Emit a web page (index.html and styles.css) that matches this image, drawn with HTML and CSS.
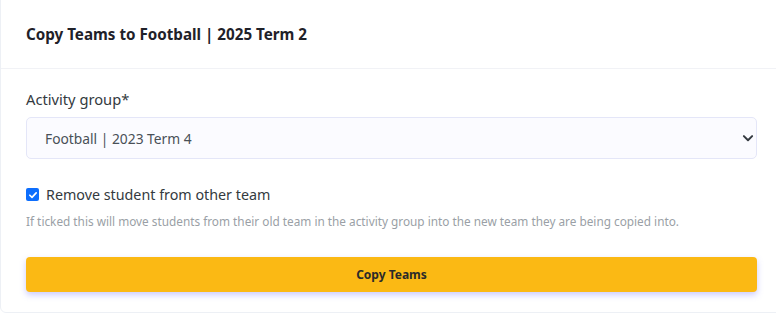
FILE: index.html
```html
<!DOCTYPE html>
<html lang="en">
<head>
    <meta charset="UTF-8">
    <meta name="viewport" content="width=device-width, initial-scale=1.0">
    <title>Copy Teams</title>
    <link rel="stylesheet" href="styles.css">
</head>
<body>
    <div class="card">
        <div class="card-header">
            <h2>Copy Teams to Football | 2025 Term 2</h2>
        </div>
        <div class="card-body">
            <label class="field-label" for="group">Activity group*</label>
            <div class="select-wrap">
                <select id="group" class="select">
                    <option>Football | 2023 Term 4</option>
                </select>
                <svg class="chevron" width="12" height="12" viewBox="0 0 16 16">
                    <path d="M2.5 5.5 L8 11 L13.5 5.5" fill="none" stroke="#343a40" stroke-width="2.6" stroke-linecap="round" stroke-linejoin="round"/>
                </svg>
            </div>

            <label class="check">
                <span class="box">
                    <svg width="10" height="10" viewBox="0 0 12 12">
                        <path d="M2.2 6.3 L4.8 8.8 L9.8 3.4" fill="none" stroke="#fff" stroke-width="2" stroke-linecap="round" stroke-linejoin="round"/>
                    </svg>
                </span>
                Remove student from other team
            </label>
            <p class="help">If ticked this will move students from their old team in the activity group into the new team they are being copied into.</p>

            <button class="btn">Copy Teams</button>
        </div>
    </div>
</body>
</html>
```

FILE: styles.css
```css
body {
    margin: 0;
    font-family: "Noto Sans", Lato, sans-serif;
    background-color: #fff;
    color: #212529;
}
.card {
    width: 800px;
    margin-top: -1px;
    border: 1px solid #edf0f5;
    border-radius: 0 0 0 6px;
    background-color: #fff;
}
.card-header {
    height: 68px;
    padding: 0 25px;
    display: flex;
    align-items: center;
    border-bottom: 1px solid #f1f2f6;
}
.card-header h2 {
    margin: 0;
    font-size: 15.2px;
    font-weight: 700;
    color: #1f2129;
}
.card-body {
    width: 731px;
    padding: 20px 25px 20px;
}
.field-label {
    display: block;
    font-size: 14.7px;
    color: #343a40;
    margin-bottom: 8px;
}
.select-wrap {
    position: relative;
}
.select {
    width: 100%;
    height: 42px;
    padding: 0 18px;
    appearance: none;
    font-family: inherit;
    font-size: 13.8px;
    color: #495057;
    background-color: #fbfbff;
    border: 1px solid #e4e6f8;
    border-radius: 5px;
}
.chevron {
    position: absolute;
    right: 3px;
    top: 15px;
}
.check {
    display: flex;
    align-items: center;
    gap: 7px;
    margin-top: 26px;
    font-size: 14.3px;
    color: #343a40;
}
.box {
    width: 13px;
    height: 13px;
    border-radius: 2px;
    background-color: #0d6efd;
    display: flex;
    align-items: center;
    justify-content: center;
}
.help {
    margin: 9px 0 0;
    font-size: 11.8px;
    color: #9a9fa6;
}
.btn {
    display: block;
    width: 100%;
    height: 35px;
    margin-top: 28px;
    border: 0;
    border-radius: 4px;
    background-color: #fbb914;
    font-family: inherit;
    font-size: 12px;
    font-weight: 700;
    color: #2a2a2a;
    box-shadow: 0 3px 6px rgba(105, 110, 255, 0.35);
}
```
